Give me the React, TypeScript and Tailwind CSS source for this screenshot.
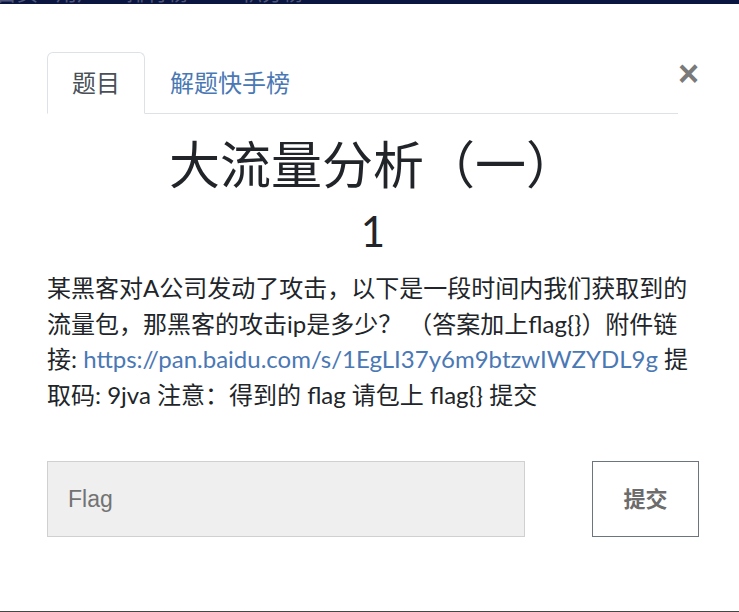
import React from "react";

const FONT = { fontFamily: "Lato, 'Noto Sans CJK SC', sans-serif" };

export default function App() {
  return (
    <div
      className="w-[739px] h-[612px] bg-white border-b border-[#4a4545] overflow-hidden flex flex-col"
      style={FONT}
    >
      {/* cut-off top navbar */}
      <div className="h-[4px] bg-[#0b1640] overflow-hidden shrink-0">
        <div className="-mt-[20px] flex items-start text-[21px] leading-[24px] text-[#4f5679] whitespace-nowrap">
          <span className="ml-[-4px] w-[60px]">首页</span>
          <span className="w-[70px]">用户</span>
          <span className="w-[115px]">排行榜 ▾</span>
          <span>积分榜 ▾</span>
        </div>
      </div>

      <div className="pl-[47px] pr-[40px] flex flex-col">
        {/* tabs + close */}
        <div className="mt-[48px] flex items-start">
          <ul className="flex flex-1 border-b border-[#dee2e6]">
            <li className="-mb-px">
              <span className="block px-[24px] py-[12px] text-[24px] leading-[36px] text-[#495057] bg-white border border-[#dee2e6] border-b-white rounded-t-[6px]">
                题目
              </span>
            </li>
            <li className="-mb-px">
              <span className="block px-[24px] py-[12px] text-[24px] leading-[36px] text-[#4a78b4] border border-transparent">
                解题快手榜
              </span>
            </li>
          </ul>
          <button
            className="w-[21px] mt-[4px] text-[36px] leading-[36px] font-bold text-[#7a7a7a] text-center"
            style={{ fontFamily: "'Liberation Sans', Arial, sans-serif" }}
          >
            ×
          </button>
        </div>

        {/* title */}
        <h3 className="mt-[20px] text-center text-[51px] leading-[61px] font-normal text-[#212529]">
          大流量分析（一）
        </h3>
        <h4 className="mt-[11px] text-center text-[42px] leading-[50px] font-normal text-[#212529]">
          1
        </h4>

        {/* description */}
        <p className="mt-[14px] text-[24px] leading-[35.5px] text-[#212529]">
          某黑客对A公司发动了攻击，以下是一段时间内我们获取到的流量包，那黑客的攻击ip是多少？ （答案加上flag{"{}"}）附件链接:{" "}
          <a className="text-[#4a78b4]">https://pan.baidu.com/s/1EgLI37y6m9btzwIWZYDL9g</a> 提取码: 9jva 注意：得到的 flag 请包上 flag{"{}"} 提交
        </p>

        {/* form */}
        <div className="mt-[49px] flex justify-between items-start">
          <input
            placeholder="Flag"
            className="w-[478px] h-[76px] bg-[#efefef] border border-[#d0d0d0] pl-[20px] text-[23px] text-[#495057] placeholder:text-[#737373] outline-none"
            style={{ fontFamily: "'Liberation Sans', Arial, 'Noto Sans CJK SC', sans-serif" }}
          />
          <button
            className="w-[107px] h-[76px] bg-white border border-[#6c757d] text-[22px] font-bold text-[#6c6c6c]"
            style={{ fontFamily: "'Liberation Sans', Arial, 'Noto Sans CJK SC', sans-serif" }}
          >
            提交
          </button>
        </div>
      </div>
    </div>
  );
}
